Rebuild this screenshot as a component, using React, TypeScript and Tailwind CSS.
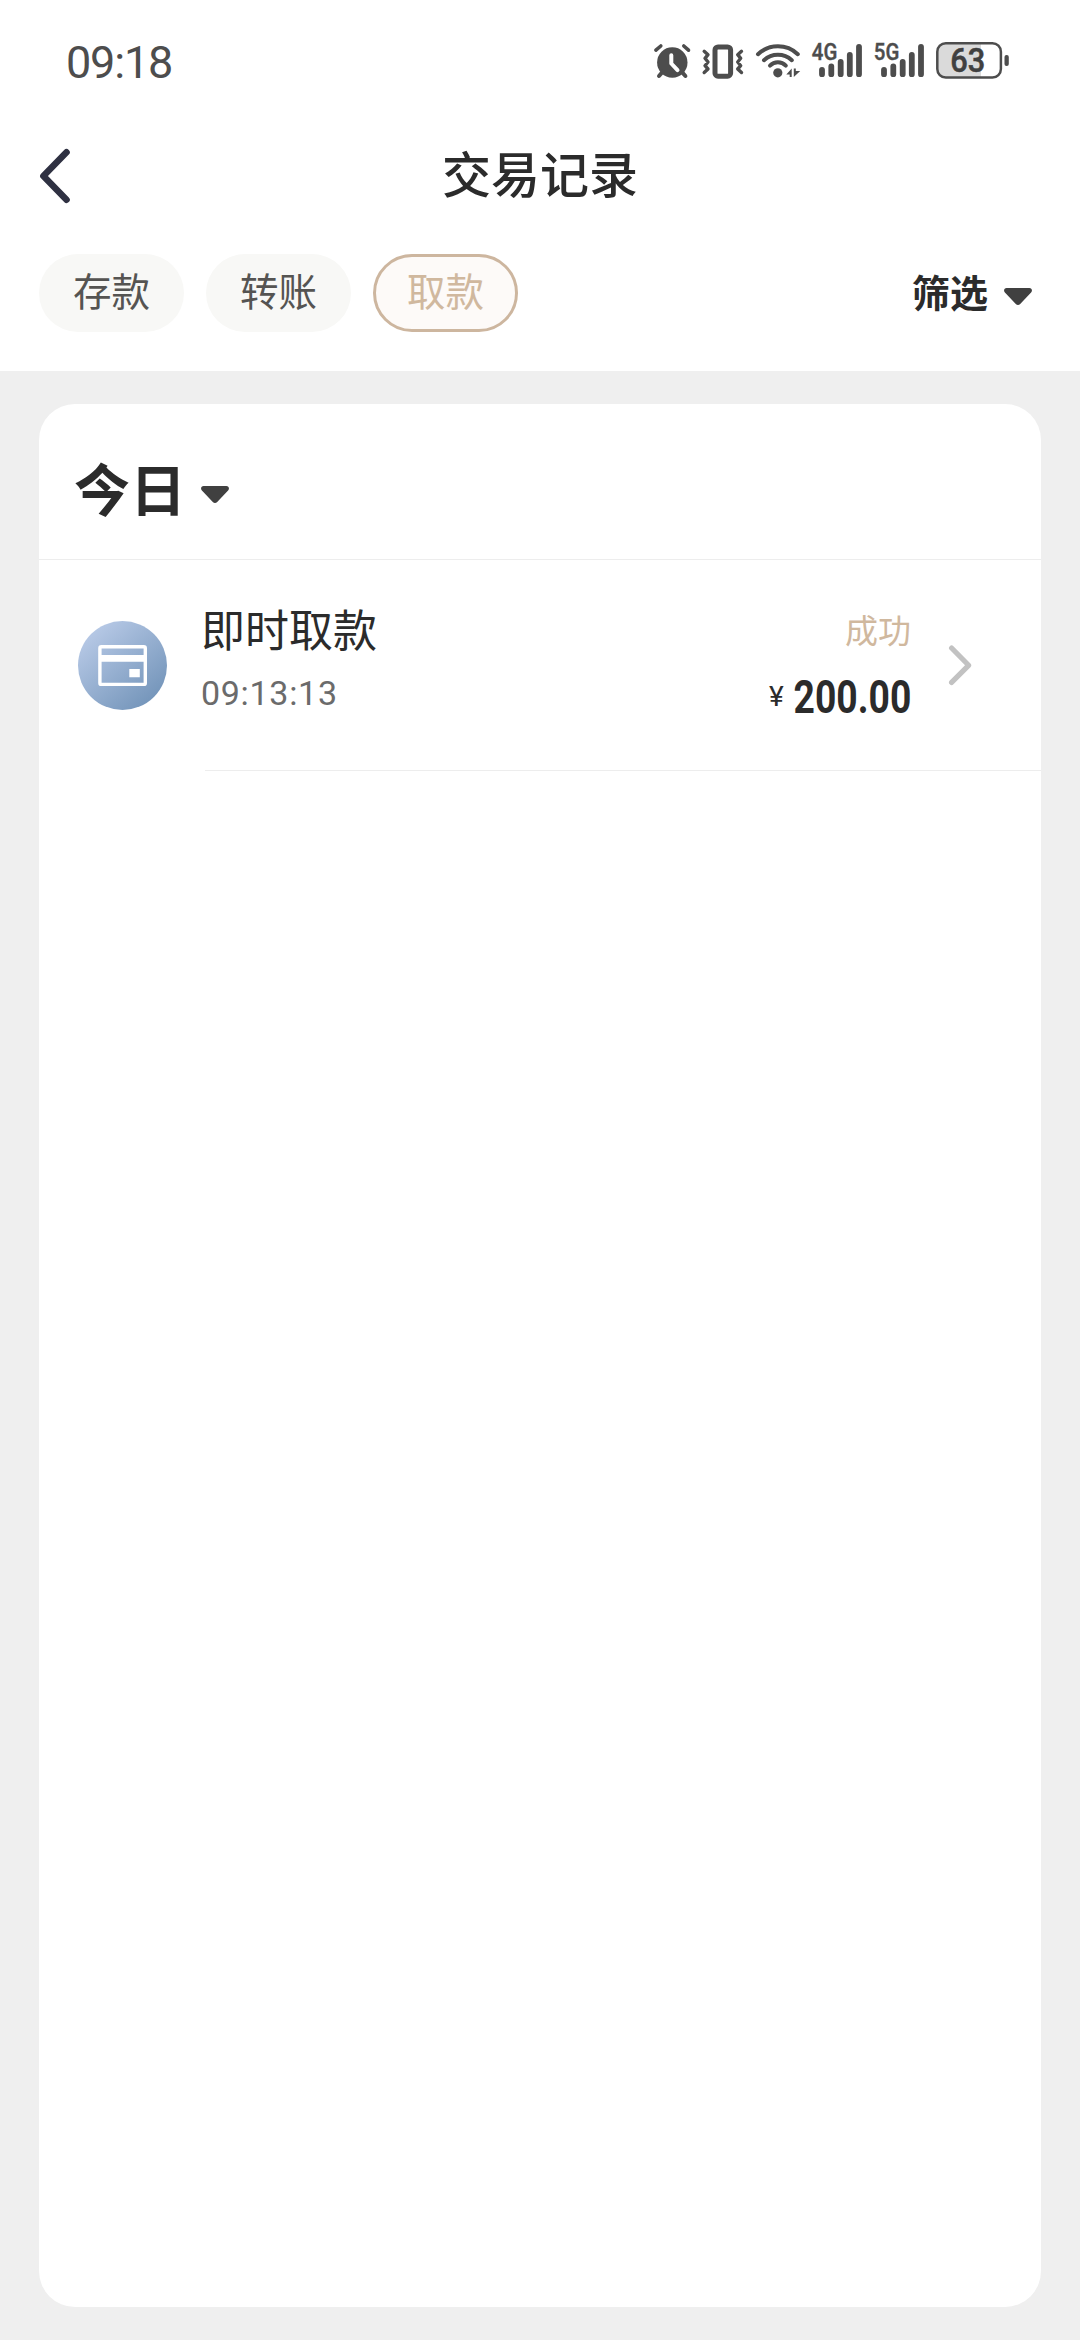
import { useState } from 'react';

interface Transaction {
  id: number;
  title: string;
  time: string;
  status: string;
  amount: string;
}

const TABS = ['存款', '转账', '取款'];

const TRANSACTIONS: Transaction[] = [
  { id: 1, title: '即时取款', time: '09:13:13', status: '成功', amount: '200.00' },
];

function AlarmIcon() {
  return (
    <svg width="40" height="42" viewBox="0 0 40 42" fill="none" stroke="#4d4d4d" strokeLinecap="round">
      <circle cx="20.3" cy="22.5" r="15.2" fill="#4d4d4d" stroke="none" />
      <path d="M3.9 10.2 8.8 6M31.8 6l4.7 4.2" strokeWidth="3.6" />
      <path d="M7 36l4-4.6M33.4 36l-4-4.6" strokeWidth="4" />
      <path d="M19.3 15.2v8.3l6.2 6.6" stroke="#fff" strokeWidth="4" strokeLinejoin="round" />
    </svg>
  );
}

function VibrateIcon() {
  return (
    <svg width="46" height="42" viewBox="0 0 46 42" fill="none" stroke="#4d4d4d" strokeLinecap="round" strokeLinejoin="round">
      <rect x="15" y="7" width="15.6" height="29.2" rx="3" strokeWidth="5" />
      <path
        d="M4.2 11.3l3.8 3.4-3 3.6 3 3.7-3 3.7 3 3.3-3.8 3.5M41.5 11.3l-3.8 3.4 3 3.6-3 3.7 3 3.7-3 3.3 3.8 3.5"
        strokeWidth="3.4"
      />
    </svg>
  );
}

function WifiIcon() {
  return (
    <svg width="48" height="42" viewBox="0 0 48 42" fill="none" stroke="#4d4d4d" strokeLinecap="round">
      <path d="M4 14.2a29 29 0 0 1 39.8 0" strokeWidth="4" />
      <path d="M10 20.2a20.5 20.5 0 0 1 27.8 0" strokeWidth="4" />
      <path d="M16 25.6a11 11 0 0 1 15.8 0" strokeWidth="4" />
      <circle cx="23.8" cy="32.8" r="4.6" fill="#4d4d4d" stroke="none" />
      <path d="M32.3 34.6l5.4-6v8.4h-2v-2.4zM39.8 37v-8.4h2v2.4h4.4z" fill="#4d4d4d" stroke="none" />
    </svg>
  );
}

function SignalIcon({ label }: { label: string }) {
  return (
    <svg width="54" height="50" viewBox="0 -4 54 50" className="overflow-visible">
      <text
        x="1.8"
        y="20.2"
        fontSize="23"
        fontWeight="500"
        fontFamily="Roboto, sans-serif"
        fill="#4d4d4d"
        stroke="#4d4d4d"
        strokeWidth="0.4"
        textLength="25.5"
        lengthAdjust="spacingAndGlyphs"
      >
        {label}
      </text>
      <path
        d="M12 29.8v4.4M21.3 26.4v7.8M30.7 22v12.2M39.8 15v19.2M49 6.8v27.4"
        stroke="#4d4d4d"
        strokeWidth="5.8"
        strokeLinecap="round"
      />
    </svg>
  );
}

function BatteryIcon({ level }: { level: number }) {
  return (
    <svg width="78" height="42" viewBox="0 0 78 42">
      <path d="M47 3.2H12a8.5 8.5 0 0 0-8.5 8.5v17a8.5 8.5 0 0 0 8.5 8.5h35z" fill="#dadada" />
      <rect x="3.3" y="3.2" width="63.6" height="34.3" rx="8.5" fill="none" stroke="#4d4d4d" strokeWidth="2.5" />
      <rect x="70.5" y="15" width="4.3" height="11" rx="2" fill="#4d4d4d" />
      <text
        x="33.8"
        y="32.2"
        textAnchor="middle"
        fontSize="32.5"
        fontWeight="500"
        fontFamily="Roboto, sans-serif"
        fill="#404040"
        stroke="#404040"
        strokeWidth="0.5"
        textLength="35"
        lengthAdjust="spacingAndGlyphs"
      >
        {level}
      </text>
    </svg>
  );
}

function Caret() {
  return (
    <svg width="28" height="17" viewBox="0 0 28 17">
      <path d="M2.6 0h22.8c2.4 0 3.4 2.8 1.7 4.4L16.2 16c-1.2 1.3-3.2 1.3-4.4 0L.9 4.4C-.8 2.8.2 0 2.6 0z" fill="#404040" />
    </svg>
  );
}

function CardIcon() {
  return (
    <svg width="89" height="89" viewBox="0 0 89 89" className="shrink-0">
      <defs>
        <linearGradient id="cardBg" x1="0.15" y1="0.1" x2="0.85" y2="0.9">
          <stop offset="0" stopColor="#b7c9e6" />
          <stop offset="1" stopColor="#7495ba" />
        </linearGradient>
      </defs>
      <circle cx="44.5" cy="44.5" r="44.5" fill="url(#cardBg)" />
      <rect x="21.9" y="25.7" width="45.4" height="37.7" rx="1.5" fill="none" stroke="#fff" strokeWidth="3.4" />
      <path d="M22 34h45v6.8H22zM51.3 48h10.5v8.2H51.3z" fill="#fff" />
    </svg>
  );
}

export default function App() {
  const [activeTab, setActiveTab] = useState('取款');

  return (
    <div className="flex h-[2340px] w-[1080px] flex-col overflow-hidden bg-[#efefef] font-['Noto_Sans_CJK_SC',sans-serif]">
      <header className="h-[371px] shrink-0 bg-white">
        {/* Status bar */}
        <div className="flex h-[122px] items-center justify-between pr-[68px] pl-[66px]">
          <span className="pt-1 font-['Roboto',sans-serif] text-[45px] leading-[48px] tracking-[-1.2px] text-[#4d4d4d]">
            09:18
          </span>
          <div className="flex items-center gap-2">
            <AlarmIcon />
            <VibrateIcon />
            <WifiIcon />
            <SignalIcon label="4G" />
            <SignalIcon label="5G" />
            <BatteryIcon level={63} />
          </div>
        </div>

        {/* Title bar */}
        <div className="grid h-[104px] grid-cols-[1fr_auto_1fr] items-center px-[39px]">
          <button aria-label="返回" className="justify-self-start">
            <svg width="32" height="56" viewBox="0 0 32 56" fill="none" className="mt-1">
              <path d="M27.5 4.3 4.4 28l23.1 23.7" stroke="#2f3142" strokeWidth="6.6" strokeLinecap="round" strokeLinejoin="round" />
            </svg>
          </button>
          <h1 className="pb-[5px] text-[49px] leading-[60px] font-medium text-[#2b2b2b]">交易记录</h1>
        </div>

        {/* Tabs */}
        <div className="flex items-center justify-between pt-7 pr-12 pl-[39px]">
          <div className="flex gap-[22px]">
            {TABS.map((tab) => (
              <button
                key={tab}
                onClick={() => setActiveTab(tab)}
                className={`flex h-[78px] w-[145px] items-center justify-center rounded-full pb-1.5 text-[38.5px] ${
                  activeTab === tab
                    ? 'border-[3px] border-[#cdb69f] bg-[#fdfaf8] text-[#d0b89e]'
                    : 'bg-[#f8f8f6] text-[#555452]'
                }`}
              >
                {tab}
              </button>
            ))}
          </div>
          <button className="flex items-center gap-4 text-[38px] leading-[60px] font-bold text-[#2b2b2b]">
            <span className="pb-[5px]">筛选</span>
            <span className="pt-1.5">
              <Caret />
            </span>
          </button>
        </div>
      </header>

      <main className="mx-[39px] mt-[33px] mb-[33px] flex-1 rounded-[36px] bg-white">
        <div className="flex h-[156px] items-center gap-[15px] border-b border-[#ededed] pt-3 pl-[35px]">
          <h2 className="pb-0.5 text-[56px] leading-[70px] font-bold text-[#2b2b2b]">今日</h2>
          <span className="pt-3.5">
            <Caret />
          </span>
        </div>

        {TRANSACTIONS.map((item) => (
          <div key={item.id} className="flex h-[211px] pl-[39px]">
            <div className="pt-[61px]">
              <CardIcon />
            </div>
            <div className="ml-[38px] flex flex-1 justify-between border-b border-[#ededed] pr-[67px]">
              <div className="-ml-1 pt-[38px]">
                <p className="text-[44px] leading-[60px] text-[#2b2b2b]">{item.title}</p>
                <p className="mt-2.5 font-['Roboto',sans-serif] text-[34px] leading-[50px] tracking-[0.7px] text-[#6b6b6b]">
                  {item.time}
                </p>
              </div>
              <div className="flex gap-[37px]">
                <div className="flex flex-col items-end pt-[45px]">
                  <span className="text-[33px] leading-[48px] text-[#d0b89e]">{item.status}</span>
                  <div className="mt-[19px] flex items-center font-['Roboto',sans-serif] text-[#2b2b2b]">
                    <span className="text-[28px] leading-[50px]">¥</span>
                    <span className="-ml-[18px] origin-right scale-x-[0.81] text-[46px] leading-[50px] font-bold">
                      {item.amount}
                    </span>
                  </div>
                </div>
                <svg width="26" height="42" viewBox="0 0 26 42" fill="none" className="mt-[84px]">
                  <path d="M3.6 4 20.6 21.3 3.6 38.4" stroke="#c2c2c2" strokeWidth="5.2" strokeLinecap="round" strokeLinejoin="round" />
                </svg>
              </div>
            </div>
          </div>
        ))}
      </main>
    </div>
  );
}
